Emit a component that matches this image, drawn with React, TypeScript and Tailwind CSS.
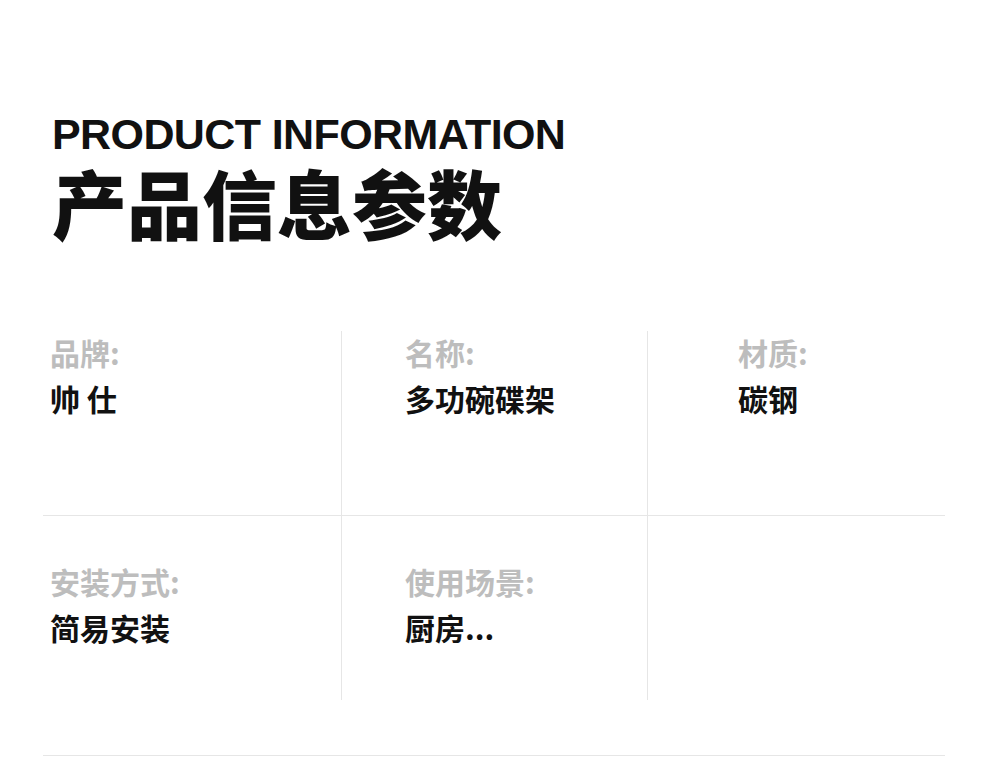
const cjk = { fontFamily: '"Noto Sans CJK SC", "Noto Sans", sans-serif' }
const latin = { fontFamily: '"Liberation Sans", "Noto Sans CJK SC", sans-serif' }

const rows = [
  [
    { label: '品牌:', value: '帅 仕' },
    { label: '名称:', value: '多功碗碟架' },
    { label: '材质:', value: '碳钢' },
  ],
  [
    { label: '安装方式:', value: '简易安装' },
    { label: '使用场景:', value: '厨房...' },
    null,
  ],
]

const colPad = ['pl-[7px]', 'pl-[63px]', 'pl-[90px]']

export default function App() {
  return (
    <div className="w-[990px] h-[784px] bg-white overflow-hidden">
      <div className="pl-[52px] pt-[113px]">
        <h2 style={latin} className="text-[43px] leading-none font-bold tracking-[-0.6px] text-[#111]">
          PRODUCT INFORMATION
        </h2>
        <h1 style={cjk} className="mt-[8px] text-[75px] leading-none font-black text-[#111]">
          产品信息参数
        </h1>
      </div>

      <div className="ml-[43px] mt-[92px] w-[902px]">
        {rows.map((row, r) => (
          <div key={r} className={r === 0 ? 'grid grid-cols-[299px_306px_297px] h-[185px] border-b border-[#e6e6e6]' : 'grid grid-cols-[299px_306px_297px] h-[184px]'}>
            {row.map((cell, c) => (
              <div
                key={c}
                style={cjk}
                className={`${colPad[c]} ${r === 0 ? 'pt-[3px]' : 'pt-[47px]'} ${c < 2 ? 'border-r border-[#e6e6e6]' : ''}`}
              >
                {cell && (
                  <>
                    <div className="text-[30px] leading-[36px] font-bold text-[#bdbdbd]">{cell.label}</div>
                    <div className="mt-[10px] text-[30px] leading-[36px] font-bold text-[#111]">{cell.value}</div>
                  </>
                )}
              </div>
            ))}
          </div>
        ))}
        <div className="mt-[55px] h-px bg-[#e6e6e6]" />
      </div>
    </div>
  )
}
